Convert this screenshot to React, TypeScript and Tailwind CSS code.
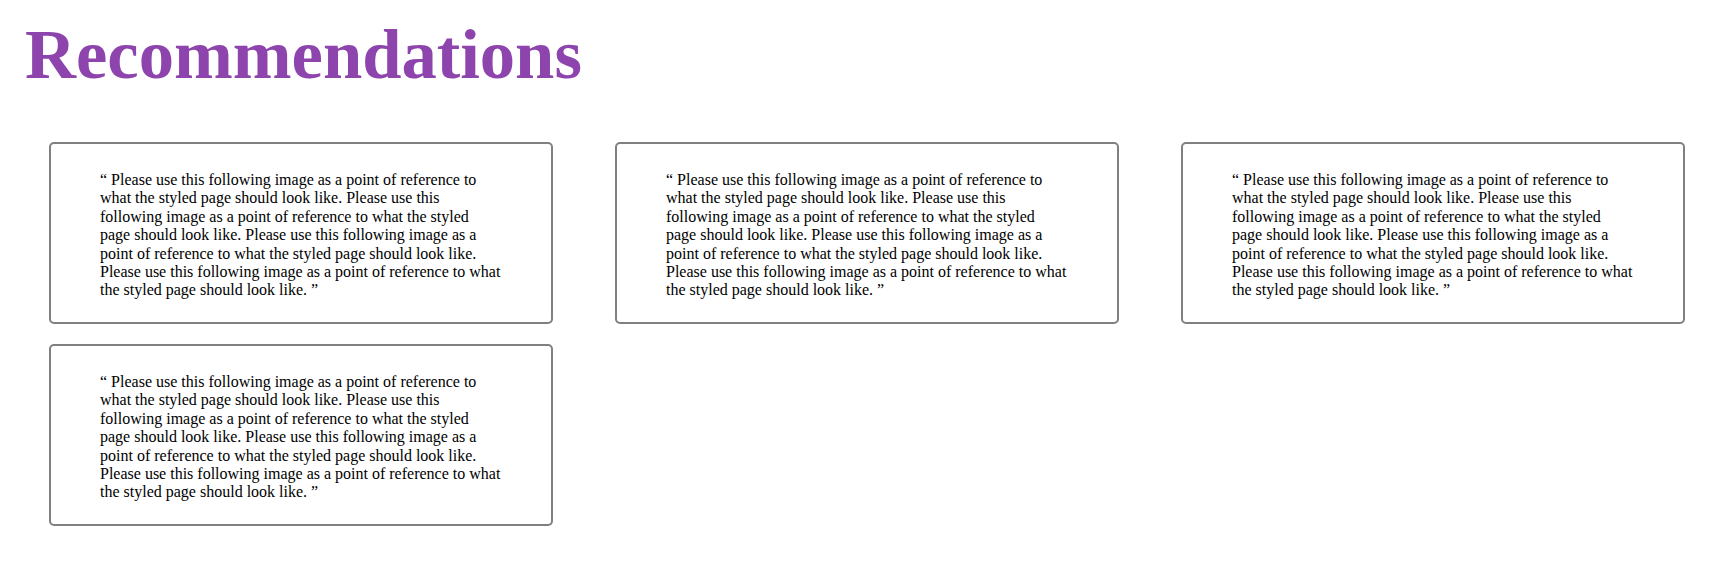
import React from "react";

const TEXT =
  "\u201C Please use this following image as a point of reference to what the styled page should look like. Please use this following image as a point of reference to what the styled page should look like. Please use this following image as a point of reference to what the styled page should look like. Please use this following image as a point of reference to what the styled page should look like. \u201D";

function Card() {
  return (
    <div className="h-[182px] rounded-[5px] border-2 border-[#808080] bg-white pl-[49px] pt-[27px]">
      <p className="w-[402px] [font-family:'Liberation_Serif',serif] text-[16px] leading-[18.4px] text-black">
        {TEXT}
      </p>
    </div>
  );
}

export default function App() {
  return (
    <div className="min-h-[577px] bg-white [font-family:'Liberation_Serif',serif]">
      <h1 className="pl-[25px] pt-[15px] [font-family:'Liberation_Serif',serif] text-[70.6px] font-bold leading-[79px] text-[#8e44ad]">
        Recommendations
      </h1>
      <div className="mt-[48px] grid grid-cols-[repeat(3,504px)] gap-x-[62px] gap-y-[20px] pl-[49px]">
        <Card />
        <Card />
        <Card />
        <Card />
      </div>
    </div>
  );
}
